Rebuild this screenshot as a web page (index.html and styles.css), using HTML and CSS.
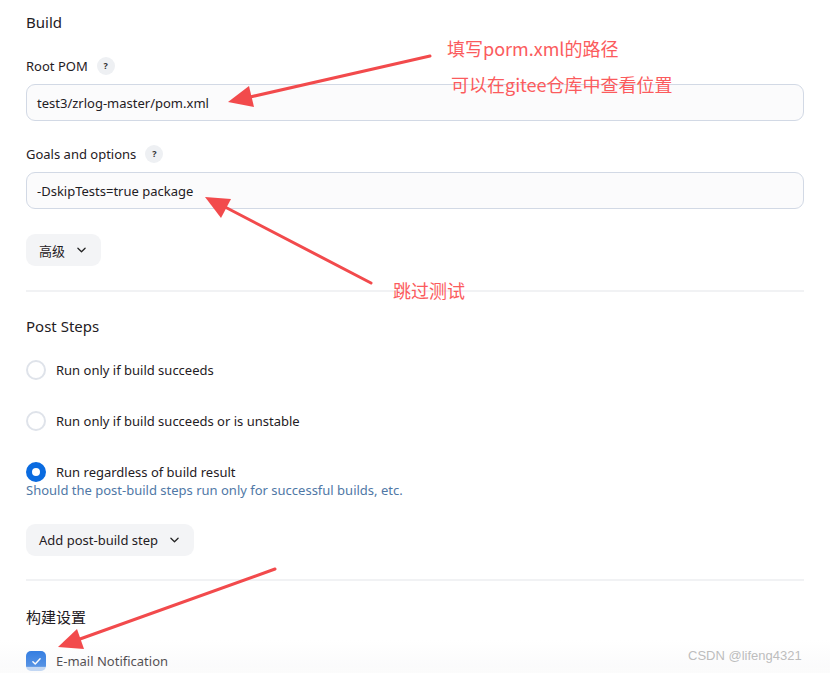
FILE: index.html
```html
<!DOCTYPE html>
<html lang="zh">
<head>
<meta charset="utf-8">
<title>Build config</title>
<link rel="stylesheet" href="styles.css">
</head>
<body>
<div class="page">
  <h2 class="section-title">Build</h2>

  <div class="field first">
    <div class="label-row"><span>Root POM</span><span class="help">?</span></div>
    <div class="input">test3/zrlog-master/pom.xml</div>
  </div>

  <div class="field">
    <div class="label-row"><span>Goals and options</span><span class="help">?</span></div>
    <div class="input">-DskipTests=true package</div>
  </div>

  <button class="btn adv">高级 <svg class="chev" viewBox="0 0 10 6" width="9" height="6"><path d="M1 1l4 4 4-4" fill="none" stroke="#222" stroke-width="1.4" stroke-linecap="round" stroke-linejoin="round"/></svg></button>

  <div class="sep"></div>

  <h2 class="section-title post">Post Steps</h2>

  <div class="radios">
    <div class="radio-row"><span class="radio"></span><span>Run only if build succeeds</span></div>
    <div class="radio-row"><span class="radio"></span><span>Run only if build succeeds or is unstable</span></div>
    <div class="radio-row"><span class="radio on"></span><span>Run regardless of build result</span></div>
  </div>
  <div class="hint">Should the post-build steps run only for successful builds, etc.</div>

  <button class="btn addstep">Add post-build step <svg class="chev" viewBox="0 0 10 6" width="9" height="6"><path d="M1 1l4 4 4-4" fill="none" stroke="#222" stroke-width="1.4" stroke-linecap="round" stroke-linejoin="round"/></svg></button>

  <div class="sep second"></div>

  <h2 class="section-title cn">构建设置</h2>

  <div class="check-row"><span class="checkbox"><svg viewBox="0 0 12 10" width="11" height="9"><path d="M2 5.2l2.6 2.6L10 2" fill="none" stroke="#fff" stroke-width="1.6" stroke-linecap="round" stroke-linejoin="round"/></svg></span><span>E-mail Notification</span></div>
</div>

<div class="fade"></div>
<div class="watermark">CSDN @lifeng4321</div>

<div class="note n1">填写porm.xml的路径</div>
<div class="note n2">可以在gitee仓库中查看位置</div>
<div class="note n3">跳过测试</div>

<svg class="arrows" width="830" height="673" viewBox="0 0 830 673">
  <g stroke="#f24a4c" stroke-width="3" stroke-linecap="round" fill="none">
    <line x1="430" y1="56" x2="250" y2="97"/>
    <line x1="371" y1="283" x2="225" y2="207"/>
    <line x1="275" y1="569" x2="80" y2="639"/>
  </g>
  <g fill="#f24a4c">
    <polygon points="228,102 254,107 249,86"/>
    <polygon points="205,197 231,199 221,218"/>
    <polygon points="58,647 84,649 77,629"/>
  </g>
</svg>
</body>
</html>
```

FILE: styles.css
```css
html, body {
  margin: 0;
  padding: 0;
  background: #ffffff;
}
body {
  width: 830px;
  height: 673px;
  overflow: hidden;
  position: relative;
  font-family: "Noto Sans", "Noto Sans CJK SC", sans-serif;
  color: #1f2024;
  font-size: 13px;
}
.page {
  padding: 12px 26px 0 26px;
  width: 778px;
}
.section-title {
  margin: 0;
  font-size: 15px;
  font-weight: 400;
  line-height: 20px;
  height: 20px;
}
.field.first { margin-top: 24px; }
.field { margin-top: 23px; }
.label-row {
  display: flex;
  align-items: center;
  gap: 9px;
  height: 20px;
  line-height: 20px;
}
.help {
  width: 18px;
  height: 18px;
  border-radius: 50%;
  background: #eef0f3;
  color: #333;
  font-size: 9px;
  font-weight: 700;
  display: flex;
  align-items: center;
  justify-content: center;
}
.input {
  margin-top: 8px;
  height: 35px;
  border: 1px solid #d2d9e5;
  border-radius: 9px;
  background: #fbfbfc;
  padding: 0 10px;
  display: flex;
  align-items: center;
}
.btn {
  font-family: inherit;
  font-size: 13px;
  color: #1f2024;
  background: #f3f4f6;
  border: none;
  border-radius: 9px;
  height: 32px;
  padding: 0 15px 0 13px;
  display: flex;
  align-items: center;
  gap: 12px;
}
.adv { margin-top: 25px; }
.sep {
  margin-top: 24px;
  height: 2px;
  background: #f1f2f4;
}
.section-title.post { margin-top: 24px; }
.radios { margin-top: 24px; display: flex; flex-direction: column; gap: 31px; }
.radio-row {
  display: flex;
  align-items: center;
  gap: 10px;
  height: 20px;
}
.radio {
  width: 20px;
  height: 20px;
  box-sizing: border-box;
  border-radius: 50%;
  border: 2px solid #dfe3ea;
  background: #fff;
  flex: none;
}
.radio.on {
  border: 6px solid #0a6be0;
}
.hint {
  color: #4f78a6;
  line-height: 16px;
  margin-top: 0;
}
.addstep { margin-top: 26px; }
.sep.second { margin-top: 23px; }
.section-title.cn { margin-top: 26px; font-size: 15px; }
.check-row {
  margin-top: 24px;
  display: flex;
  align-items: center;
  gap: 10px;
  height: 20px;
}
.checkbox {
  width: 20px;
  height: 20px;
  border-radius: 5px;
  background: #1c6fdf;
  display: flex;
  align-items: center;
  justify-content: center;
  flex: none;
}
.fade {
  position: absolute;
  left: 0;
  right: 0;
  top: 640px;
  height: 33px;
  background: linear-gradient(to bottom, rgba(240,240,242,0) 0%, rgba(240,240,242,0.28) 80%, rgba(250,250,250,0.75) 82%, rgba(250,250,250,0.75) 100%);
}
.watermark {
  position: absolute;
  left: 688px;
  top: 648px;
  font-family: "Liberation Sans", sans-serif;
  font-size: 13px;
  color: #bdbdbd;
}
.note {
  position: absolute;
  color: #fb5b5d;
  font-size: 18px;
  line-height: 22px;
  font-family: "Noto Sans CJK SC", "Noto Sans", sans-serif;
}
.n1 { left: 447px; top: 37px; }
.n2 { left: 451px; top: 73px; }
.n3 { left: 393px; top: 279px; }
.arrows {
  position: absolute;
  left: 0;
  top: 0;
  pointer-events: none;
}
```
